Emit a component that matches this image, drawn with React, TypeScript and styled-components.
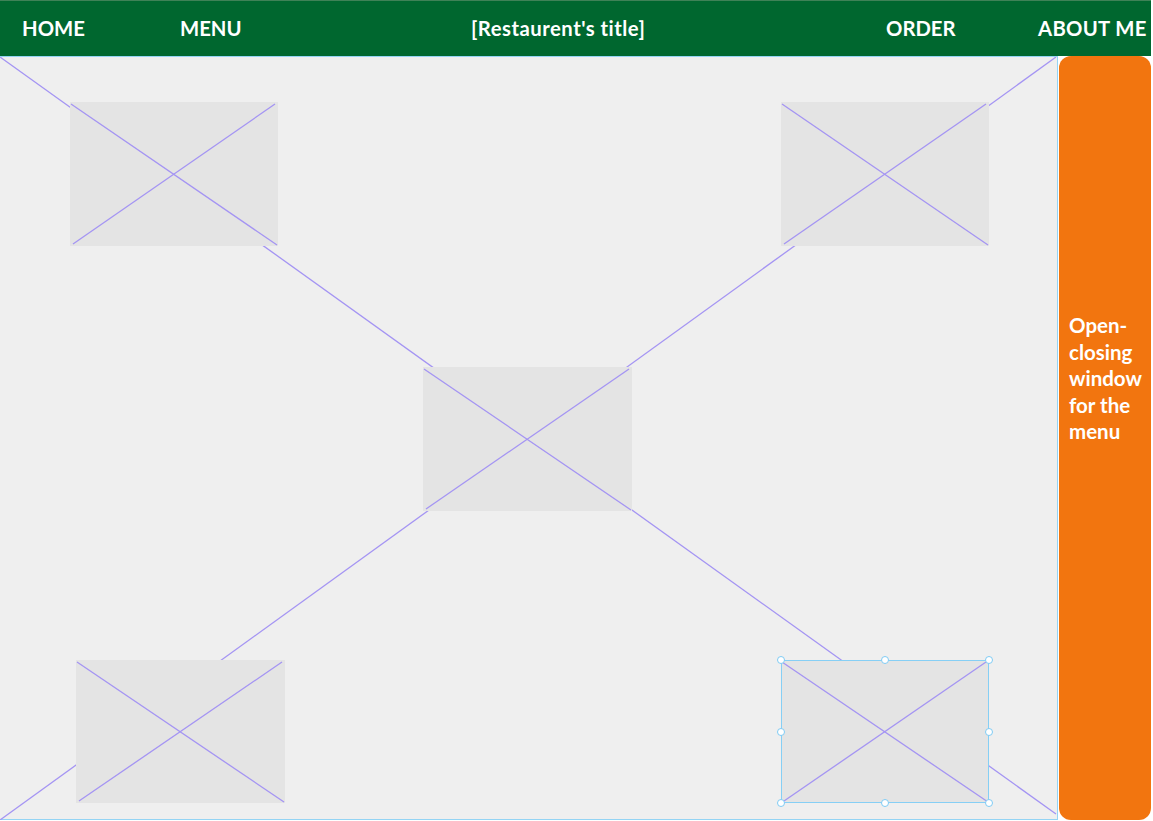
import styled, { createGlobalStyle } from "styled-components";

const GlobalStyle = createGlobalStyle`
  html, body {
    margin: 0;
    padding: 0;
    background: #ffffff;
    font-family: Lato, "Open Sans", Arial, sans-serif;
  }
`;

type BoxProps = {
  w: number;
  h: number;
  selected?: boolean;
};

const handles = [
  [0, 0],
  [50, 0],
  [100, 0],
  [0, 50],
  [100, 50],
  [0, 100],
  [50, 100],
  [100, 100],
];

function ImageBox({ w, h, selected }: BoxProps) {
  return (
    <Box $w={w} $h={h} $selected={selected}>
      <BoxCross viewBox={`0 0 ${w} ${h}`} preserveAspectRatio="none">
        <line x1="1" y1="2" x2={w - 1} y2={h - 1} />
        <line x1="3" y1={h - 2} x2={w - 3} y2="2" />
      </BoxCross>
      {selected &&
        handles.map(([x, y]) => <Handle key={`${x}-${y}`} $x={x} $y={y} />)}
    </Box>
  );
}

export default function App() {
  return (
    <Page>
      <GlobalStyle />
      <Header>
        <NavItem>HOME</NavItem>
        <NavItem>MENU</NavItem>
        <NavItem $spacing={0.5}>[Restaurent's title]</NavItem>
        <NavItem>ORDER</NavItem>
        <NavItem $spacing={0.3}>ABOUT ME</NavItem>
      </Header>
      <Body>
        <Canvas>
          <BigCross viewBox="0 0 1057 763" preserveAspectRatio="none">
            <line x1="0" y1="0" x2="1056" y2="757" />
            <line x1="1056" y1="0" x2="0" y2="763" />
          </BigCross>
          <Row $top={45} $left={70} $gap={503}>
            <ImageBox w={208} h={144} />
            <ImageBox w={208} h={144} />
          </Row>
          <Row $top={121} $left={423} $gap={0}>
            <ImageBox w={209} h={144} />
          </Row>
          <Row $top={149} $left={76} $gap={496}>
            <ImageBox w={209} h={143} />
            <ImageBox w={208} h={143} selected />
          </Row>
        </Canvas>
        <SidePanel>
          <SideText>Open-closing window for the menu</SideText>
        </SidePanel>
      </Body>
    </Page>
  );
}

const Page = styled.div`
  width: 1153px;
  height: 821px;
  overflow: hidden;
`;

const Header = styled.div`
  width: 1151px;
  height: 56px;
  box-sizing: border-box;
  padding-left: 22px;
  display: grid;
  grid-template-columns: 158px 291px 415px 152px auto;
  align-items: center;
  background-color: #00672f;
  box-shadow: inset 0 1px 0 #3f8257;
`;

const NavItem = styled.div<{ $spacing?: number }>`
  color: #ffffff;
  font-family: Lato, "Open Sans", Arial, sans-serif;
  font-weight: 700;
  font-size: 20.3px;
  line-height: 56px;
  letter-spacing: ${(p) => p.$spacing ?? 0}px;
  white-space: nowrap;
`;

const Body = styled.div`
  display: flex;
  gap: 1px;
  height: 764px;
`;

const Canvas = styled.div`
  position: relative;
  width: 1058px;
  height: 764px;
  box-sizing: border-box;
  display: flex;
  flex-direction: column;
  background-color: #efefef;
  border: 1px solid #94d4f4;
  border-left: none;
`;

const BigCross = styled.svg`
  position: absolute;
  left: 0;
  top: 0;
  width: 1057px;
  height: 763px;

  line {
    stroke: #a494f3;
    stroke-width: 1.3;
    vector-effect: non-scaling-stroke;
  }
`;

const Row = styled.div<{ $top: number; $left: number; $gap: number }>`
  position: relative;
  display: flex;
  margin-top: ${(p) => p.$top}px;
  padding-left: ${(p) => p.$left}px;
  gap: ${(p) => p.$gap}px;
`;

const Box = styled.div<{ $w: number; $h: number; $selected?: boolean }>`
  position: relative;
  width: ${(p) => p.$w}px;
  height: ${(p) => p.$h}px;
  box-sizing: border-box;
  background-color: #e4e4e4;
  outline: ${(p) => (p.$selected ? "1px solid #86cff5" : "none")};
  outline-offset: -1px;
`;

const BoxCross = styled.svg`
  display: block;
  width: 100%;
  height: 100%;

  line {
    stroke: #a494f3;
    stroke-width: 1.3;
    vector-effect: non-scaling-stroke;
  }
`;

const Handle = styled.span<{ $x: number; $y: number }>`
  position: absolute;
  left: ${(p) => p.$x}%;
  top: ${(p) => p.$y}%;
  width: 8px;
  height: 8px;
  box-sizing: border-box;
  border-radius: 50%;
  background: #ffffff;
  border: 1.5px solid #7fcbf4;
  transform: translate(-50%, -50%);
`;

const SidePanel = styled.div`
  width: 92px;
  height: 764px;
  box-sizing: border-box;
  padding: 256px 2px 0 10px;
  border-radius: 12px;
  background-color: #f2750f;
`;

const SideText = styled.div`
  color: #ffffff;
  font-family: Lato, "Open Sans", Arial, sans-serif;
  font-weight: 700;
  font-size: 20.5px;
  line-height: 26.5px;
`;
